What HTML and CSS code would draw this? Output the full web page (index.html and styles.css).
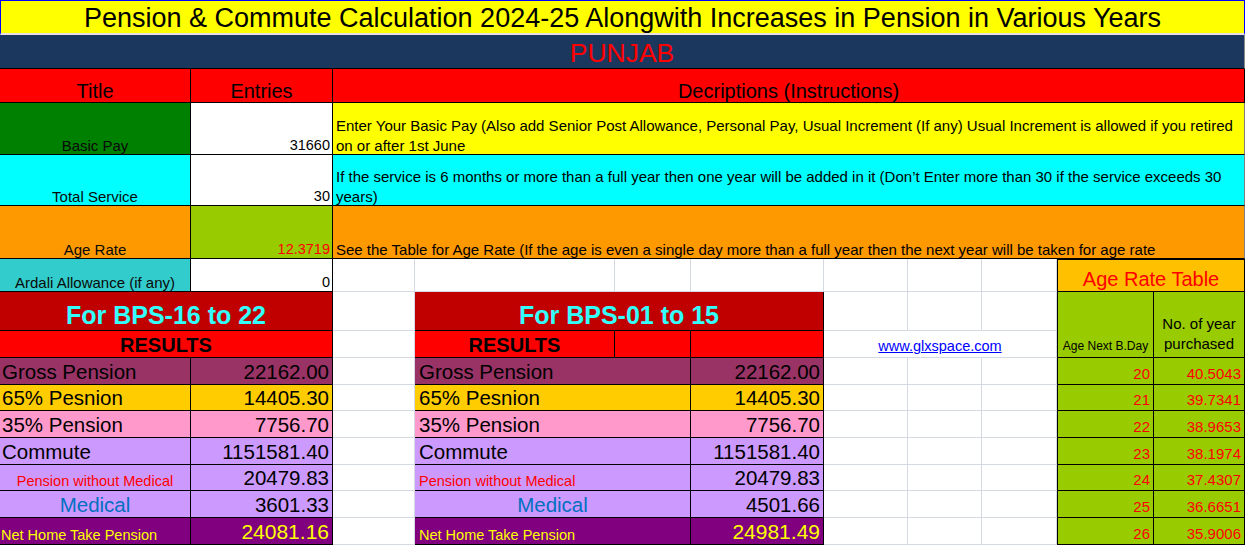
FILE: index.html
```html
<!DOCTYPE html>
<html lang="en">
<head>
<meta charset="utf-8">
<title>Pension &amp; Commute Calculation 2024-25</title>
<link rel="stylesheet" href="styles.css">
</head>
<body>
<div class="sheet">
  <div class="c s11 title">Pension &amp; Commute Calculation 2024-25 Alongwith Increases in Pension in Various Years</div>
  <div class="c s11 province">PUNJAB</div>

  <div class="c hdr">Title</div>
  <div class="c hdr">Entries</div>
  <div class="c hdr s9">Decriptions (Instructions)</div>

  <div class="c lbl green">Basic Pay</div>
  <div class="c entry">31660</div>
  <div class="c s9 desc yellow"><span>Enter Your Basic Pay (Also add Senior Post Allowance, Personal Pay, Usual Increment (If any) Usual Increment is allowed if you retired<br>on or after 1st June</span></div>

  <div class="c lbl cyan">Total Service</div>
  <div class="c entry">30</div>
  <div class="c s9 desc cyan"><span>If the service is 6 months or more than a full year then one year will be added in it (Don’t Enter more than 30 if the service exceeds 30<br>years)</span></div>

  <div class="c lbl orange">Age Rate</div>
  <div class="c entry lime red-text">12.3719</div>
  <div class="c s9 desc orange"><span>See the Table for Age Rate (If the age is even a single day more than a full year then the next year will be taken for age rate</span></div>

  <div class="c lbl teal">Ardali Allowance (if any)</div>
  <div class="c entry">0</div>
  <div class="c g"></div><div class="c g"></div><div class="c g"></div><div class="c g"></div><div class="c g"></div><div class="c g"></div><div class="c g"></div>
  <div class="c s2 age-title">Age Rate Table</div>

  <div class="c s2 bps">For BPS-16 to 22</div>
  <div class="c g"></div>
  <div class="c s3 bps">For BPS-01 to 15</div>
  <div class="c g"></div><div class="c g"></div><div class="c g"></div>
  <div class="c r2 age-head small-head">Age Next B.Day</div>
  <div class="c r2 age-head">No. of year<br>purchased</div>

  <div class="c s2 results">RESULTS</div>
  <div class="c g"></div>
  <div class="c results">RESULTS</div>
  <div class="c results"></div>
  <div class="c results"></div>
  <div class="c s3 g link-cell"><a href="#">www.glxspace.com</a></div>

  <div class="c big plum">Gross Pension</div>
  <div class="c big plum num">22162.00</div>
  <div class="c g"></div>
  <div class="c s2 big plum pad">Gross Pension</div>
  <div class="c big plum num">22162.00</div>
  <div class="c g"></div><div class="c g"></div><div class="c g"></div>
  <div class="c age num">20</div><div class="c age num">40.5043</div>

  <div class="c big gold">65% Pesnion</div>
  <div class="c big gold num">14405.30</div>
  <div class="c g"></div>
  <div class="c s2 big gold pad">65% Pesnion</div>
  <div class="c big gold num">14405.30</div>
  <div class="c g"></div><div class="c g"></div><div class="c g"></div>
  <div class="c age num">21</div><div class="c age num">39.7341</div>

  <div class="c big pink">35% Pension</div>
  <div class="c big pink num">7756.70</div>
  <div class="c g"></div>
  <div class="c s2 big pink pad">35% Pension</div>
  <div class="c big pink num">7756.70</div>
  <div class="c g"></div><div class="c g"></div><div class="c g"></div>
  <div class="c age num">22</div><div class="c age num">38.9653</div>

  <div class="c big lilac">Commute</div>
  <div class="c big lilac num">1151581.40</div>
  <div class="c g"></div>
  <div class="c s2 big lilac pad">Commute</div>
  <div class="c big lilac num">1151581.40</div>
  <div class="c g"></div><div class="c g"></div><div class="c g"></div>
  <div class="c age num">23</div><div class="c age num">38.1974</div>

  <div class="c lilac note center">Pension without Medical</div>
  <div class="c big lilac num">20479.83</div>
  <div class="c g"></div>
  <div class="c s2 lilac note pad">Pension without Medical</div>
  <div class="c big lilac num">20479.83</div>
  <div class="c g"></div><div class="c g"></div><div class="c g"></div>
  <div class="c age num">24</div><div class="c age num">37.4307</div>

  <div class="c big lilac medical center">Medical</div>
  <div class="c big lilac num">3601.33</div>
  <div class="c g"></div>
  <div class="c s2 big lilac medical center">Medical</div>
  <div class="c big lilac num">4501.66</div>
  <div class="c g"></div><div class="c g"></div><div class="c g"></div>
  <div class="c age num">25</div><div class="c age num">36.6651</div>

  <div class="c purple net-lbl">Net Home Take Pension</div>
  <div class="c purple net-val num">24081.16</div>
  <div class="c g"></div>
  <div class="c s2 purple net-lbl pad">Net Home Take Pension</div>
  <div class="c purple net-val num">24981.49</div>
  <div class="c g"></div><div class="c g"></div><div class="c g"></div>
  <div class="c age num">26</div><div class="c age num">35.9006</div>
</div>
</body>
</html>
```

FILE: styles.css
```css
html, body {
  margin: 0;
  padding: 0;
  background: #ffffff;
  overflow: hidden;
}

body {
  font-family: "Liberation Sans", Arial, sans-serif;
  color: #000000;
}

.sheet {
  display: grid;
  width: 1245px;
  grid-template-columns: 191px 142px 82px 200px 76px 133px 84px 74px 75px 97px 91px;
  grid-template-rows: 35px 34px 34px 52px 51px 53px 33px 39px 27px 27px 26px 27px 27px 26px 27px 27px;
}

.c {
  box-sizing: border-box;
  display: flex;
  align-items: flex-end;
  justify-content: center;
  border-right: 1px solid #000000;
  border-bottom: 1px solid #000000;
  font-size: 15px;
  line-height: 17px;
  white-space: nowrap;
  overflow: hidden;
}

.s2 { grid-column: span 2; }
.s3 { grid-column: span 3; }
.s9 { grid-column: span 9; }
.s11 { grid-column: span 11; }
.r2 { grid-row: span 2; }

/* empty spreadsheet cells */
.g {
  background: #ffffff;
  border-right-color: #d4d9e3;
  border-bottom-color: #d4d9e3;
}

.title {
  background: #ffff00;
  border: 1px solid #0000ff;
  border-bottom: 2px solid #eadfe3;
  font-size: 27px;
  line-height: 30px;
}

.province {
  background: #1c375d;
  color: #ff0000;
  font-size: 26.5px;
  line-height: 30px;
  border-right-color: #8a8a8a;
}

.hdr {
  background: #ff0000;
  font-size: 20px;
  line-height: 22px;
}

.lbl { color: #0a0a0a; }

.entry {
  background: #ffffff;
  justify-content: flex-end;
  padding-right: 2px;
  font-size: 14.5px;
}

.desc {
  justify-content: flex-start;
  padding: 0 3px;
  white-space: normal;
  border-right-color: #7f7f7f;
}

.desc span {
  display: block;
  line-height: 20px;
  margin-bottom: -2px;
}

.green { background: #008000; }
.cyan { background: #00ffff; }
.yellow { background: #ffff00; }
.orange { background: #ff9900; }
.teal { background: #33cccc; }
.lime { background: #99cc00; }
.red-text { color: #ff0000; }

.age-title {
  background: #ffc000;
  color: #ff0000;
  font-size: 20px;
  line-height: 24px;
  border-left: 1px solid #000000;
  border-top: 1px solid #000000;
}

.age-head {
  background: #99cc00;
  font-size: 15px;
  line-height: 20px;
  text-align: center;
  white-space: normal;
  padding-bottom: 3px;
}

.small-head {
  font-size: 12px;
  line-height: 16px;
  border-left: 1px solid #000000;
}

.age {
  background: #99cc00;
  color: #ff0000;
  font-size: 15px;
  line-height: 20px;
}

.age:nth-last-child(2n) {
  border-left: 1px solid #000000;
}

.bps {
  background: #c00000;
  color: #33ffff;
  font-weight: bold;
  font-size: 25px;
  line-height: 30px;
}

.results {
  background: #ff0000;
  font-weight: bold;
  font-size: 20px;
  line-height: 23px;
}

.link-cell {
  font-size: 14.5px;
  line-height: 20px;
  padding-bottom: 1px;
}

.link-cell a {
  color: #0000ff;
  text-decoration: underline;
}

.big {
  font-size: 20.5px;
  line-height: 25px;
  justify-content: flex-start;
  padding-left: 2px;
}

.big.pad, .note.pad, .net-lbl.pad { padding-left: 4px; }

.num {
  justify-content: flex-end;
  padding-right: 3px;
  padding-left: 0;
}

.center { justify-content: center; padding-left: 0; }

.plum { background: #993366; }
.gold { background: #ffcc00; }
.pink { background: #ff99cc; }
.lilac { background: #cc99ff; }
.purple { background: #800080; }

.note {
  color: #ff0000;
  font-size: 14.5px;
  line-height: 18px;
}

.note.pad { justify-content: flex-start; }

.medical { color: #0070c0; }

.net-lbl {
  color: #ffff00;
  font-size: 14.5px;
  line-height: 17px;
  justify-content: flex-start;
  padding-left: 1px;
}

.net-val {
  color: #ffff00;
  font-size: 21px;
  line-height: 25px;
}
```
